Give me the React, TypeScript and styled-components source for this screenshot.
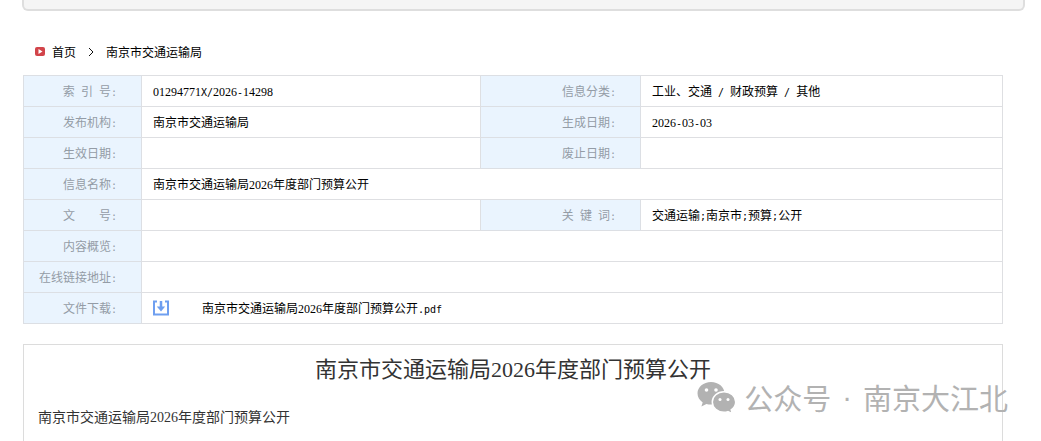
import React from "react";
import styled, { createGlobalStyle } from "styled-components";

const GlobalStyle = createGlobalStyle`
  * { box-sizing: border-box; }
  body {
    margin: 0;
    background: #fff;
    color: #000;
    font: 12px/30px "Noto Sans CJK SC", sans-serif;
  }
  a { color: inherit; text-decoration: none; }
`;

const Page = styled.div`
  position: relative;
  display: flex;
  flex-direction: column;
  min-height: 100vh;
`;

const Banner = styled.header`
  height: 11px;
  margin: 0 16px 0 22px;
  background: #f5f5f5;
  border: 2px solid #dedede;
  border-top: 0;
  border-radius: 0 0 6px 6px;
`;

const Content = styled.main`
  flex: 1;
  display: flex;
  flex-direction: column;
  margin: 26px 38px 0 23px;
`;

const Breadcrumb = styled.nav`
  display: flex;
  align-items: center;
  height: 30px;
  margin-bottom: 8px;
  padding-left: 12px;
`;

const Marker = styled.svg`
  margin-right: 6px;
`;

const Chevron = styled.svg`
  margin: 0 12px;
`;

const InfoTable = styled.table`
  width: 100%;
  table-layout: fixed;
  border-collapse: collapse;
`;

const LabelCol = styled.col<{ $wide?: boolean }>`
  width: ${({ $wide }) => ($wide ? 160 : 118)}px;
`;

const ValueCol = styled.col`
  width: 339px;
`;

const Label = styled.th`
  height: 31px;
  padding: 0 24px 0 0;
  border: 1px solid #dcdfe4;
  background: #eaf4fe;
  color: #949ca6;
  font-weight: 400;
  text-align: right;
  white-space: nowrap;
`;

const Value = styled.td`
  height: 31px;
  padding: 0 11px;
  border: 1px solid #dedfe2;
`;

const HalfWidth = styled.span`
  font-family: "DejaVu Sans Mono", monospace;
  font-size: 10px;
  line-height: 1;
  white-space: pre;
`;

const Digits = styled.span`
  font-family: "Liberation Serif", serif;
  line-height: 1;
`;

const Download = styled.a`
  display: flex;
  align-items: center;
  gap: 33px;
`;

const Article = styled.article`
  flex: 1;
  margin-top: 20px;
  padding: 8px 14px 0;
  border: 1px solid #dcdcdc;
  border-bottom: 0;
`;

const Title = styled.h1`
  margin: 0 0 16px;
  color: #333;
  font: 400 22px/34px "Liberation Serif", "Noto Sans CJK SC", serif;
  text-align: center;
`;

const Body = styled.p`
  margin: 0;
  color: #333;
  font: 14px/30px "Liberation Serif", "Noto Sans CJK SC", serif;
`;

const Watermark = styled.div`
  position: absolute;
  right: 33px;
  bottom: 24px;
  display: flex;
  align-items: center;
  gap: 8px;
  color: #b2b2b2;
  font-size: 29px;
  line-height: 40px;
  white-space: nowrap;
`;

const WatermarkText = styled.span`
  display: flex;
  gap: 11px;
`;

const Dot = styled.span`
  font-family: "Liberation Sans", sans-serif;
`;

/* Sets Latin characters at half the width of a Chinese character. */
function Mixed({ text }: { text: string }) {
  return (
    <>
      {text.split(/([0-9]+|[^0-9\u0080-\uffff]+)/).map((part, i) => {
        if (i % 2 === 0) return part;
        return /^[0-9]/.test(part) ? (
          <Digits key={i}>{part}</Digits>
        ) : (
          <HalfWidth key={i}>{part}</HalfWidth>
        );
      })}
    </>
  );
}

function DownloadIcon() {
  return (
    <svg width="16" height="16" viewBox="0 0 16 16" fill="none" stroke="#6f9ff0" strokeWidth="2" aria-hidden="true">
      <path d="M4 1.500H1V14.500H15V1.500H12" />
      <path d="M8 1V8" strokeWidth="2.500" />
      <path d="M3.800 6.500H12.200L8 11.500Z" fill="#6f9ff0" stroke="none" />
    </svg>
  );
}

function WeChatIcon() {
  return (
    <svg width="39" height="33" viewBox="0 0 39 33" aria-hidden="true">
      <path
        fill="#b2b2b2"
        d="M14 1C6.500 1 .5 6 .5 12.300c0 3.800 2 7 5.200 9.100L4.400 25.500l5-2.500c1.500.4 3 .6 4.600.6 7.500 0 13.500-5 13.500-11.300S21.500 1 14 1z"
      />
      <path
        fill="#b2b2b2"
        stroke="#fff"
        strokeWidth="1.500"
        d="M27 10.800c-6.500 0-11.700 4.600-11.700 10.200S20.500 31.200 27 31.200c1.400 0 2.700-.2 3.900-.6l4.500 2-1.200-3.700c2.800-1.900 4.500-4.700 4.500-7.900 0-5.600-5.200-10.200-11.700-10.200z"
      />
      <g fill="#fff">
        <circle cx="9.500" cy="9" r="1.800" />
        <circle cx="19" cy="9" r="1.800" />
        <circle cx="23" cy="18.500" r="1.500" />
        <circle cx="31" cy="18.500" r="1.500" />
      </g>
    </svg>
  );
}

type Field = [label: string, value: React.ReactNode];

const fileName = "南京市交通运输局2026年度部门预算公开";

const rows: Field[][] = [
  [["索 引 号:", <Mixed text="01294771X/2026-14298" />], ["信息分类:", <Mixed text="工业、交通 / 财政预算 / 其他" />]],
  [["发布机构:", "南京市交通运输局"], ["生成日期:", <Mixed text="2026-03-03" />]],
  [["生效日期:", ""], ["废止日期:", ""]],
  [["信息名称:", <Mixed text={fileName} />]],
  [["文　　号:", ""], ["关 键 词:", <Mixed text="交通运输;南京市;预算;公开" />]],
  [["内容概览:", ""]],
  [["在线链接地址:", ""]],
  [
    [
      "文件下载:",
      <Download href="#download">
        <DownloadIcon />
        <span>
          <Mixed text={`${fileName}.pdf`} />
        </span>
      </Download>,
    ],
  ],
];

export default function App() {
  return (
    <>
      <GlobalStyle />
      <Page>
        <Banner />
        <Content>
          <Breadcrumb>
            <Marker width="11" height="10" viewBox="0 0 11 10" aria-hidden="true">
              <rect width="10" height="9" rx="2" fill="#d2444a" />
              <path d="M3.500 2L7.500 4.500L3.500 7Z" fill="#fff" />
            </Marker>
            <a href="#home">首页</a>
            <Chevron width="6" height="10" viewBox="0 0 6 10" fill="none" stroke="#111" aria-hidden="true">
              <path d="M1 1L5 5L1 9" />
            </Chevron>
            <a href="#bureau">南京市交通运输局</a>
          </Breadcrumb>
          <InfoTable>
            <colgroup>
              <LabelCol />
              <ValueCol />
              <LabelCol $wide />
              <col />
            </colgroup>
            <tbody>
              {rows.map((fields) => (
                <tr key={fields[0][0]}>
                  {fields.map(([label, value]) => (
                    <React.Fragment key={label}>
                      <Label scope="row">
                        <Mixed text={label} />
                      </Label>
                      <Value colSpan={fields.length === 1 ? 3 : 1}>{value}</Value>
                    </React.Fragment>
                  ))}
                </tr>
              ))}
            </tbody>
          </InfoTable>
          <Article>
            <Title>{fileName}</Title>
            <Body>{fileName}</Body>
          </Article>
        </Content>
        <Watermark>
          <WeChatIcon />
          <WatermarkText>
            <span>公众号</span>
            <Dot>·</Dot>
            <span>南京大江北</span>
          </WatermarkText>
        </Watermark>
      </Page>
    </>
  );
}
